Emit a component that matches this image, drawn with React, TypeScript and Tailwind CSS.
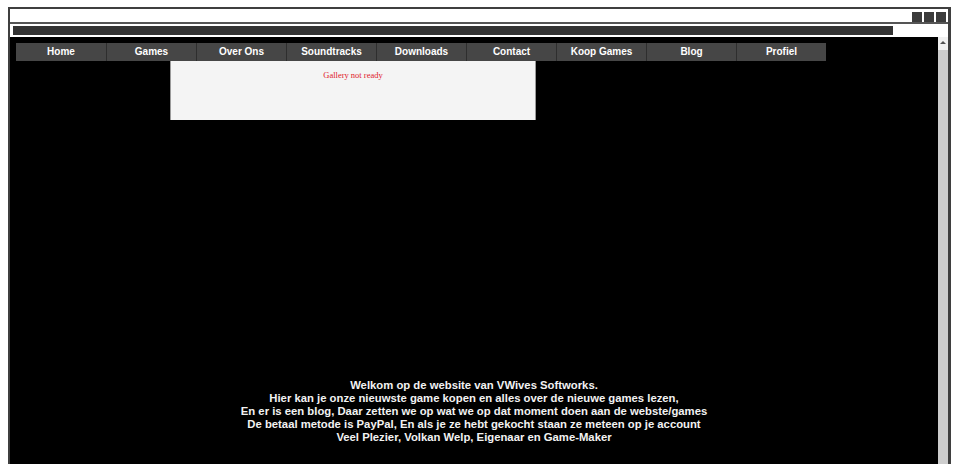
const navItems = ['Home', 'Games', 'Over Ons', 'Soundtracks', 'Downloads', 'Contact', 'Koop Games', 'Blog', 'Profiel'];

const welcomeLines = [
  'Welkom op de website van VWives Softworks.',
  'Hier kan je onze nieuwste game kopen en alles over de nieuwe games lezen,',
  'En er is een blog, Daar zetten we op wat we op dat moment doen aan de webste/games',
  'De betaal metode is PayPal, En als je ze hebt gekocht staan ze meteen op je account',
  'Veel Plezier, Volkan Welp, Eigenaar en Game-Maker',
];

function TitleBar() {
  return (
    <div className="h-[13px] bg-white flex justify-end items-end gap-[2px] pr-[2px]">
      <div className="w-[10px] h-[10px] bg-[#3b3b3b]" />
      <div className="w-[10px] h-[10px] bg-[#3b3b3b]" />
      <div className="w-[10px] h-[10px] bg-[#3b3b3b]" />
    </div>
  );
}

function AddressBar() {
  return (
    <div className="h-[13px] bg-white pl-[3px] pt-[2px]">
      <div className="w-[880px] h-[9px] bg-[#333333]" />
    </div>
  );
}

function Scrollbar() {
  return (
    <div className="w-[10px] flex flex-col bg-[#cdcdcd]">
      <div className="h-[13px] bg-[#f0f0f0] flex justify-center pt-[3px]">
        <svg width="6" height="4" viewBox="0 0 6 4">
          <path d="M0 4 L3 1 L6 4 Z" fill="#505050" />
        </svg>
      </div>
      <div className="flex-1 bg-[#cdcdcd]" />
    </div>
  );
}

export default function App() {
  return (
    <div className="w-[960px] h-[464px] overflow-hidden bg-white pt-[7px] pl-[8px]" style={{ fontFamily: '"Liberation Sans", Arial, sans-serif' }}>
      <div className="w-[943px] h-[470px] flex flex-col border-t-2 border-l-2 border-r-[3px] border-[#3f3f3f]">
        <TitleBar />
        <div className="h-[2px] bg-[#555555]" />
        <AddressBar />
        <div className="flex-1 flex">
          <main className="flex-1 bg-black pt-[6px]">
            <nav className="ml-[6px] flex">
              {navItems.map((item, i) => (
                <div
                  key={item}
                  className={`w-[90px] h-[18px] bg-[#464646] text-white text-[10px] font-bold leading-[18px] text-center ${i > 0 ? 'border-l border-[#2e2e2e]' : ''}`}
                >
                  {item}
                </div>
              ))}
            </nav>
            <div
              className="ml-[160px] w-[366px] h-[59px] bg-[#f4f4f4] border-x border-[#9a9a9a] pt-[10px] text-center text-[8.5px] leading-[9px] text-[#e0202a]"
              style={{ fontFamily: '"Liberation Serif", "Times New Roman", serif' }}
            >
              Gallery not ready
            </div>
            <div className="mt-[259px] text-center text-[11.3px] leading-[13px] font-bold text-[#f2f2f2]">
              {welcomeLines.map((line) => (
                <div key={line}>{line}</div>
              ))}
            </div>
          </main>
          <Scrollbar />
        </div>
      </div>
    </div>
  );
}
